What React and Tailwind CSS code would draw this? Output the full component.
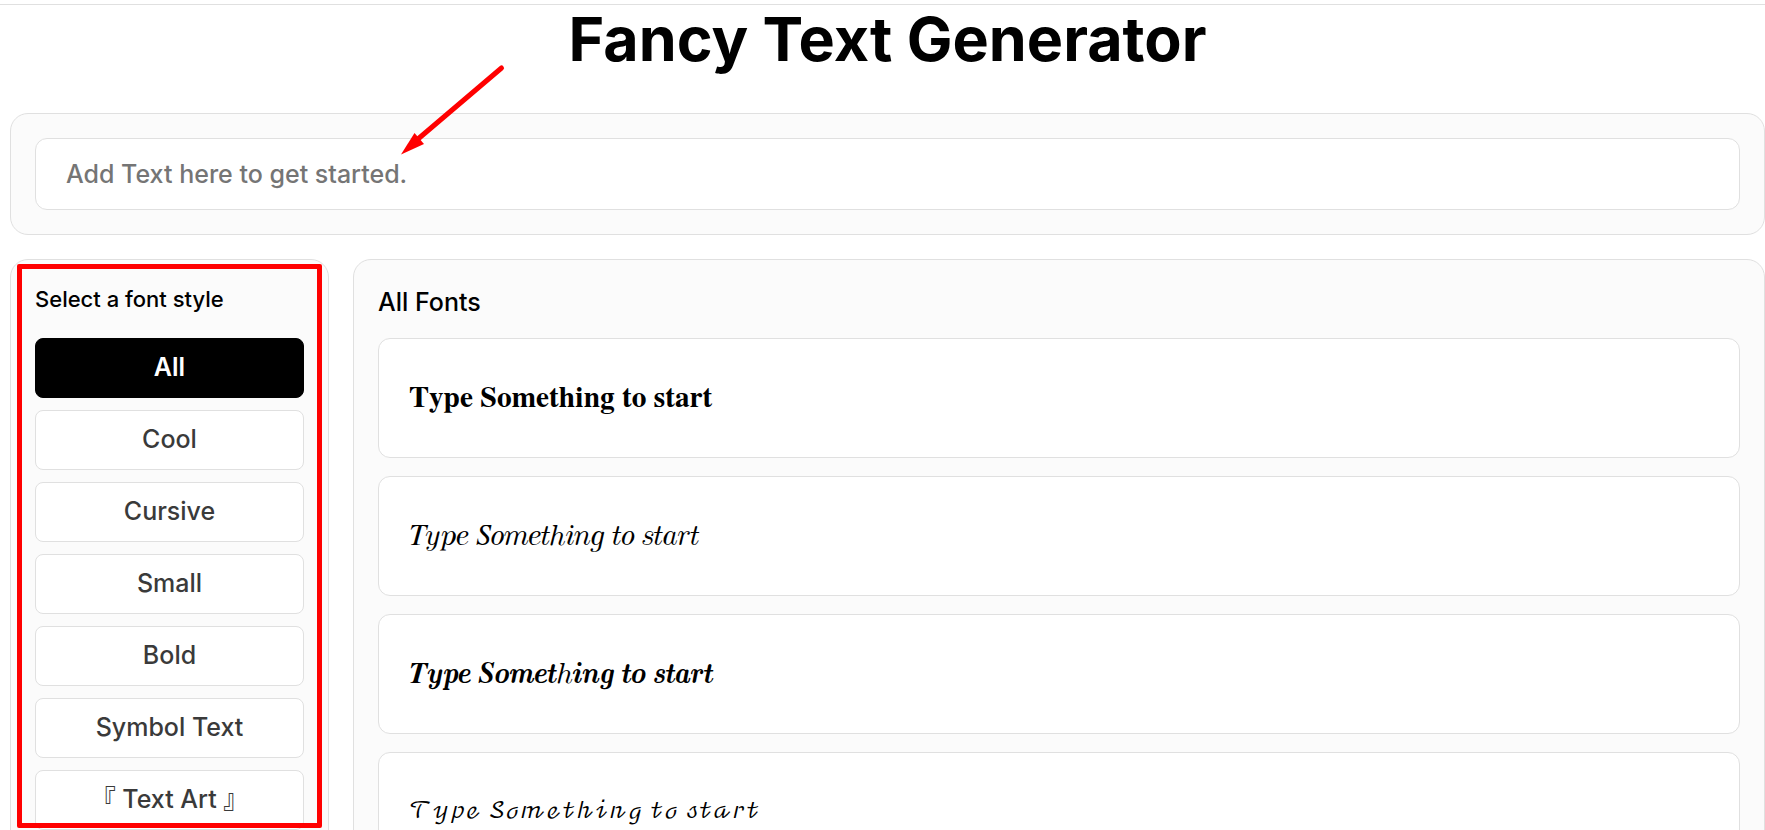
import { useState } from "react";

const styles = ["All", "Cool", "Cursive", "Small", "Bold", "Symbol Text", "『 Text Art 』"];

const serif = "font-['FreeSerif','STIX_Two_Math','DejaVu_Math_TeX_Gyre',serif] text-[30px]";
const script = "font-['DejaVu_Math_TeX_Gyre','FreeSerif',serif] text-[22px]";

const samples = [
  { text: "𝐓𝐲𝐩𝐞 𝐒𝐨𝐦𝐞𝐭𝐡𝐢𝐧𝐠 𝐭𝐨 𝐬𝐭𝐚𝐫𝐭", face: serif },
  { text: "𝑇𝑦𝑝𝑒 𝑆𝑜𝑚𝑒𝑡ℎ𝑖𝑛𝑔 𝑡𝑜 𝑠𝑡𝑎𝑟𝑡", face: serif },
  { text: "𝑻𝒚𝒑𝒆 𝑺𝒐𝒎𝒆𝒕ℎ𝒊𝒏𝒈 𝒕𝒐 𝒔𝒕𝒂𝒓𝒕", face: serif },
  { text: "𝒯𝓎𝓅ℯ 𝒮ℴ𝓂ℯ𝓉𝒽𝒾𝓃ℊ 𝓉ℴ 𝓈𝓉𝒶𝓇𝓉", face: script },
];

function Arrow() {
  return (
    <svg
      className="pointer-events-none absolute left-[400px] top-[64px] h-[92px] w-[108px]"
      viewBox="400 64 108 92"
      aria-hidden="true"
    >
      <path d="M501.500 68 L418 139" stroke="#ff0000" strokeWidth="5" strokeLinecap="round" />
      <path d="M401 154.500 L414.500 133 L424 144 Z" fill="#ff0000" />
    </svg>
  );
}

export default function App() {
  const [active, setActive] = useState("All");
  return (
    <div className="relative h-screen overflow-hidden bg-white pt-1 font-['Inter','Noto_Sans_CJK_JP',sans-serif] text-black">
      <header className="border-t border-[#e0e0e0] pl-[10px]">
        <h1 className="h-[108px] text-center text-[61px] font-bold leading-[68px]">
          Fancy Text Generator
        </h1>
      </header>
      <main className="flex flex-col gap-6 pl-[10px]">
        <section className="rounded-[18px] border border-[#e0e0e0] bg-[#fbfbfb] p-6">
          <input
            type="text"
            aria-label="Text to convert"
            placeholder="Add Text here to get started."
            className="block h-[72px] w-full rounded-xl border border-[#e0e0e0] bg-white px-[30px] text-[25px] font-medium outline-none placeholder:text-[#757575]"
          />
        </section>
        <div className="flex gap-6">
          <aside className="relative w-[319px] shrink-0 rounded-[18px] border border-[#e0e0e0] bg-[#fbfbfb] p-6">
            <h2 className="h-[54px] text-[22px] font-medium leading-[30px]">Select a font style</h2>
            <div className="flex flex-col gap-3">
              {styles.map((s) => (
                <button
                  key={s}
                  type="button"
                  onClick={() => setActive(s)}
                  className={
                    "h-[60px] rounded-lg border text-[25px] " +
                    (s === active
                      ? "border-black bg-black font-semibold text-white"
                      : "border-[#e0e0e0] bg-white font-medium text-[#3a3a3a]")
                  }
                >
                  {s}
                </button>
              ))}
            </div>
            <div className="pointer-events-none absolute left-[6px] top-1 h-[564px] w-[305px] rounded-[2px] border-[5px] border-[#ff0000]" />
          </aside>
          <section className="min-w-0 grow rounded-[18px] border border-[#e0e0e0] bg-[#fbfbfb] p-6">
            <h2 className="h-[54px] text-[25px] font-medium leading-[36px]">All Fonts</h2>
            <ul className="flex flex-col gap-[18px]">
              {samples.map(({ text, face }) => (
                <li
                  key={text}
                  className={
                    "flex h-[120px] items-center rounded-xl border border-[#e0e0e0] bg-white px-[30px] leading-[36px] " +
                    face
                  }
                >
                  {text}
                </li>
              ))}
            </ul>
          </section>
        </div>
      </main>
      <Arrow />
    </div>
  );
}
